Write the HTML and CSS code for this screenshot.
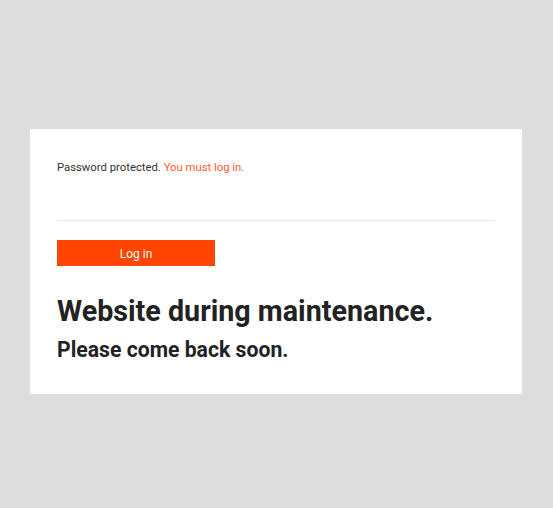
FILE: index.html
```html
<!DOCTYPE html>
<html>
<head>
<meta charset="utf-8">
<link rel="stylesheet" href="styles.css">
</head>
<body>
<div class="page">
  <div class="card">
    <p class="notice">Password protected. <a class="login-link" href="#">You must log in.</a></p>
    <hr class="divider">
    <button class="btn">Log in</button>
    <h1 class="title">Website during maintenance.</h1>
    <h2 class="subtitle">Please come back soon.</h2>
  </div>
</div>
</body>
</html>
```
FILE: styles.css
```css
html, body {
  margin: 0;
  padding: 0;
  background: #dddddd;
  font-family: Roboto, "Liberation Sans", sans-serif;
}
.page {
  padding: 129px 31px 0 30px;
}
.card {
  background: #ffffff;
  width: 492px;
  height: 265px;
  box-sizing: border-box;
  padding: 1px 27px 0 27px;
}
.notice {
  margin: 31px 0 0 0;
  font-size: 11.3px;
  line-height: 14px;
  color: #333333;
}
.login-link {
  color: #ff5a36;
  text-decoration: none;
}
.divider {
  margin: 45px 0 0 0;
  border: 0;
  height: 1px;
  background: #e6e6e6;
}
.btn {
  display: block;
  margin-top: 19px;
  width: 158px;
  height: 26px;
  border: 0;
  background: #ff4500;
  color: #ffffff;
  font-family: Roboto, "Liberation Sans", sans-serif;
  font-size: 12px;
  padding: 2px 0 0 0;
}
.title {
  margin: 28px 0 0 0;
  font-size: 28.7px;
  line-height: 34px;
  font-weight: 700;
  color: #222222;
}
.subtitle {
  margin: 9px 0 0 0;
  font-size: 21.2px;
  line-height: 25px;
  font-weight: 700;
  color: #222222;
}
```
